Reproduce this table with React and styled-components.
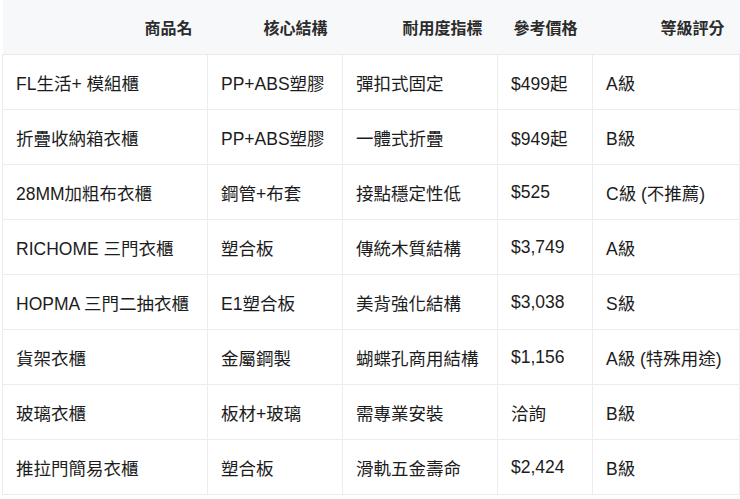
import React from 'react'
import styled, { createGlobalStyle } from 'styled-components'

const GlobalStyle = createGlobalStyle`
    html, body {
        margin: 0;
        padding: 0;
        background: #ffffff;
    }
    body {
        font-family: "Liberation Sans", "Noto Sans CJK TC", sans-serif;
        color: #1f1f1f;
    }
`;

const Wrap = styled.div`
    width: 740px;
    height: 499px;
    overflow: hidden;
    background: #ffffff;
`;

const Table = styled.table`
    border-collapse: collapse;
    table-layout: fixed;
    width: 737px;
    margin-left: 2px;
`;

const HeadCell = styled.th`
    height: 54px;
    padding: 0 15px;
    background: #f7f8fa;
    border-bottom: 1px solid #e9eaec;
    text-align: right;
    font-size: 16px;
    font-weight: 700;
    color: #2b2b2b;
`;

const Row = styled.tr`
    height: 55px;
`;

const Cell = styled.td`
    padding: 1px 14px 0 13px;
    border: 1px solid #ececec;
    border-top: none;
    font-size: 17.5px;
    color: #1c1c1c;
    white-space: nowrap;
`;

const columns = [
    { title: '商品名', width: 205 },
    { title: '核心結構', width: 135 },
    { title: '耐用度指標', width: 155 },
    { title: '參考價格', width: 95 },
    { title: '等級評分', width: 147 },
];

const rows = [
    ['FL生活+ 模組櫃', 'PP+ABS塑膠', '彈扣式固定', '$499起', 'A級'],
    ['折疊收納箱衣櫃', 'PP+ABS塑膠', '一體式折疊', '$949起', 'B級'],
    ['28MM加粗布衣櫃', '鋼管+布套', '接點穩定性低', '$525', 'C級 (不推薦)'],
    ['RICHOME 三門衣櫃', '塑合板', '傳統木質結構', '$3,749', 'A級'],
    ['HOPMA 三門二抽衣櫃', 'E1塑合板', '美背強化結構', '$3,038', 'S級'],
    ['貨架衣櫃', '金屬鋼製', '蝴蝶孔商用結構', '$1,156', 'A級 (特殊用途)'],
    ['玻璃衣櫃', '板材+玻璃', '需專業安裝', '洽詢', 'B級'],
    ['推拉門簡易衣櫃', '塑合板', '滑軌五金壽命', '$2,424', 'B級'],
];

function App() {
    return (
        <Wrap>
            <GlobalStyle />
            <Table>
                <colgroup>
                    {columns.map(col => <col key={col.title} style={{ width: col.width }} />)}
                </colgroup>
                <thead>
                    <tr>
                        {columns.map(col => <HeadCell key={col.title}>{col.title}</HeadCell>)}
                    </tr>
                </thead>
                <tbody>
                    {rows.map((row, i) => (
                        <Row key={i}>
                            {row.map((value, j) => <Cell key={j}>{value}</Cell>)}
                        </Row>
                    ))}
                </tbody>
            </Table>
        </Wrap>
    )
}

export default App
